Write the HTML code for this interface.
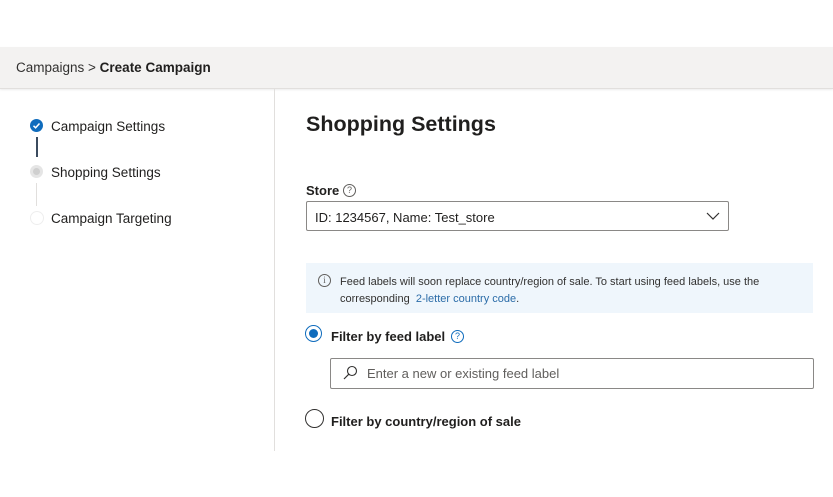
<!DOCTYPE html>
<html><head><style>
body{margin:0;width:833px;height:497px;background:#fff;font-family:"Liberation Sans",sans-serif;color:#201f1e;position:relative;overflow:hidden}
.a{position:absolute}
</style></head><body>
<div class="a" style="left:0;top:47px;width:833px;height:41px;background:#f3f2f1;border-bottom:1px solid #e1dfdd;box-shadow:0 1px 2px rgba(0,0,0,.08)"></div>
<div class="a" style="left:16px;top:60px;font-size:13.5px;color:#323130">Campaigns &gt; <b style="color:#201f1e">Create Campaign</b></div>
<div class="a" style="left:274px;top:89px;width:1px;height:362px;background:#e1dfdd"></div>
<div class="a" style="left:30px;top:119px;width:13px;height:13px;border-radius:50%;background:#0f6cbd"></div>
<svg class="a" style="left:30px;top:119px" width="13" height="13"><path d="M3.5 6.8 L5.6 8.8 L9.5 4.5" stroke="#fff" stroke-width="1.5" fill="none"/></svg>
<div class="a" style="left:36px;top:137px;width:2px;height:20px;background:#3b4b5e"></div>
<div class="a" style="left:30px;top:165px;width:13px;height:13px;border-radius:50%;background:#e5e5e5"></div>
<div class="a" style="left:33px;top:168px;width:7px;height:7px;border-radius:50%;background:#cfcfcf"></div>
<div class="a" style="left:36px;top:183px;width:1px;height:23px;background:#e1dfdd"></div>
<div class="a" style="left:30px;top:211px;width:12px;height:12px;border-radius:50%;border:1px solid #eee"></div>
<div class="a" style="left:51px;top:119px;font-size:13.5px">Campaign Settings</div>
<div class="a" style="left:51px;top:165px;font-size:13.5px">Shopping Settings</div>
<div class="a" style="left:51px;top:211px;font-size:13.5px">Campaign Targeting</div>
<div class="a" style="left:306px;top:112px;font-size:21.5px;font-weight:bold">Shopping Settings</div>
<div class="a" style="left:306px;top:183px;font-size:13px;font-weight:bold">Store</div>
<div class="a" style="left:343px;top:184px;width:11px;height:11px;border:1px solid #605e5c;border-radius:50%;font-size:9px;text-align:center;line-height:11px;color:#605e5c">?</div>
<div class="a" style="left:306px;top:201px;width:421px;height:28px;border:1px solid #8a8886;border-radius:2px"></div>
<div class="a" style="left:315px;top:210px;font-size:13px">ID: 1234567, Name: Test_store</div>
<svg class="a" style="left:706px;top:211px" width="14" height="10"><path d="M1 2 L7 8 L13 2" stroke="#323130" stroke-width="1.2" fill="none"/></svg>
<div class="a" style="left:306px;top:263px;width:507px;height:50px;background:#eff6fc"></div>
<div class="a" style="left:318px;top:274px;width:11px;height:11px;border:1px solid #605e5c;border-radius:50%;font-size:9px;text-align:center;line-height:11px;color:#605e5c;font-family:'Liberation Serif',serif">i</div>
<div class="a" style="left:340px;top:274px;font-size:11px;line-height:17px;color:#323130">Feed labels will soon replace country/region of sale. To start using feed labels, use the<br>corresponding &nbsp;<span style="color:#2b6ca8">2-letter country code</span>.</div>
<div class="a" style="left:305px;top:325px;width:17px;height:17px;border:1.5px solid #0f6cbd;border-radius:50%;box-sizing:border-box"></div>
<div class="a" style="left:309px;top:329px;width:9px;height:9px;background:#0f6cbd;border-radius:50%"></div>
<div class="a" style="left:331px;top:329px;font-size:13px;font-weight:bold">Filter by feed label</div>
<div class="a" style="left:451px;top:330px;width:11px;height:11px;border:1px solid #0f6cbd;border-radius:50%;font-size:9px;text-align:center;line-height:11px;color:#0f6cbd">?</div>
<div class="a" style="left:330px;top:358px;width:482px;height:29px;border:1px solid #8a8886;border-radius:2px"></div>
<svg class="a" style="left:342px;top:365px" width="16" height="16"><circle cx="10" cy="6" r="4.5" stroke="#323130" stroke-width="1.1" fill="none"/><path d="M6.8 9.2 L2 14" stroke="#323130" stroke-width="1.2"/></svg>
<div class="a" style="left:367px;top:366px;font-size:13px;color:#605e5c">Enter a new or existing feed label</div>
<div class="a" style="left:305px;top:409px;width:19px;height:19px;border:1.5px solid #323130;border-radius:50%;box-sizing:border-box"></div>
<div class="a" style="left:331px;top:414px;font-size:13px;font-weight:bold">Filter by country/region of sale</div>
</body></html>
